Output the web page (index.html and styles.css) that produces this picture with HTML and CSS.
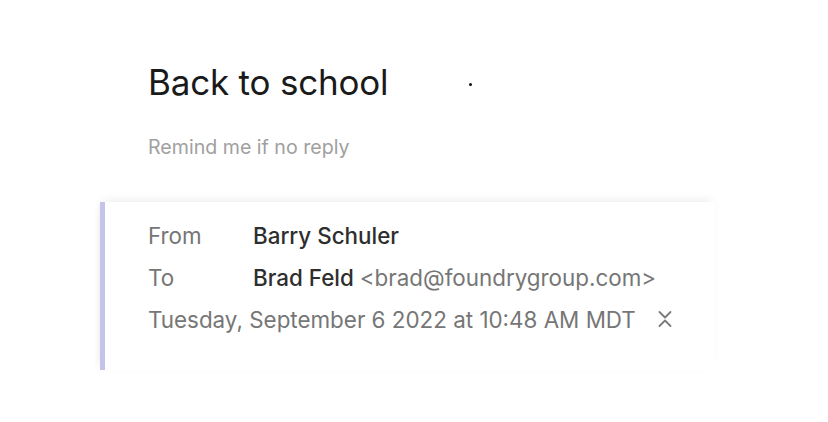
FILE: index.html
```html
<!DOCTYPE html>
<html>
<head>
<meta charset="utf-8">
<link rel="stylesheet" href="styles.css">
</head>
<body>
<div class="page">
  <div class="header">
    <h1 class="subject">Back to school</h1>
    <span class="dot"></span>
  </div>
  <div class="remind">Remind me if no reply</div>
  <div class="card">
    <div class="row"><span class="label">From</span><span class="value">Barry Schuler</span></div>
    <div class="row"><span class="label">To</span><span class="value">Brad Feld <span class="email">&lt;brad@foundrygroup.com&gt;</span></span></div>
    <div class="row date">
      <span>Tuesday, September 6 2022 at 10:48 AM MDT</span>
      <svg class="collapse" width="16" height="18" viewBox="0 0 16 18" fill="none" stroke="#7a7a7a" stroke-width="1.8" stroke-linecap="round" stroke-linejoin="round">
        <path d="M2.5 2 L8 7.5 L13.5 2"/>
        <path d="M2.5 16 L8 10.5 L13.5 16"/>
      </svg>
    </div>
  </div>
</div>
</body>
</html>
```

FILE: styles.css
```css
html, body {
  margin: 0;
  padding: 0;
  background: #ffffff;
}
body {
  width: 828px;
  height: 422px;
  overflow: hidden;
  font-family: Inter, "Noto Sans", sans-serif;
}
.page {
  padding-top: 58px;
}
.header {
  display: flex;
  align-items: center;
  padding-left: 148px;
}
.subject {
  margin: 0;
  font-size: 35px;
  font-weight: 400;
  color: #1a1a1a;
  line-height: 48px;
  letter-spacing: -0.2px;
}
.dot {
  width: 3px;
  height: 3px;
  border-radius: 50%;
  background: #111;
  margin-left: 81px;
  margin-top: 4px;
}
.remind {
  margin-top: 29px;
  padding-left: 148px;
  font-size: 19.6px;
  color: #a0a0a0;
  line-height: 24px;
}
.card {
  margin-top: 43px;
  margin-left: 100px;
  width: 615px;
  height: 168px;
  box-sizing: border-box;
  border-left: 5px solid #c5c3ea;
  background: #fff;
  box-shadow: 0 -6px 10px -4px rgba(0,0,0,0.07), -4px 0 8px -4px rgba(0,0,0,0.08);
  padding: 12px 0 0 43px;
}
.row {
  display: flex;
  align-items: center;
  height: 42px;
  font-size: 22.4px;
  color: #767676;
}
.label {
  width: 105px;
}
.value {
  color: #2e2e2e;
  font-weight: 500;
}
.email {
  font-weight: 400;
  color: #767676;
}
.date {
  gap: 21px;
}
.collapse {
  display: block;
}
```
